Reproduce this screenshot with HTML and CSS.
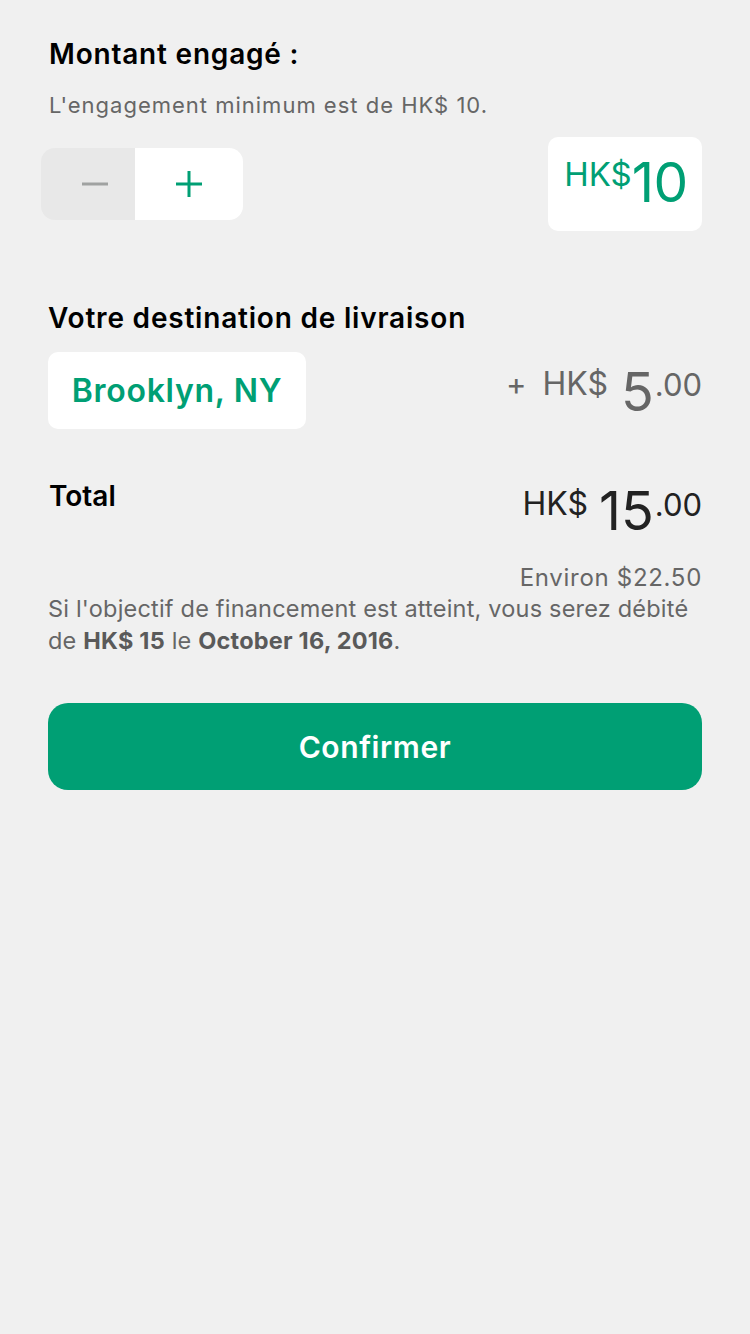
FILE: index.html
```html
<!DOCTYPE html>
<html lang="fr">
<head>
<meta charset="utf-8">
<link rel="stylesheet" href="styles.css">
</head>
<body>
<main class="page">
  <section class="pledge">
    <h2 class="heading">Montant engagé :</h2>
    <p class="hint">L'engagement minimum est de HK$ 10.</p>
    <div class="pledge-row">
      <div class="stepper">
        <button class="step step-minus" aria-label="moins">
          <svg width="26" height="4" viewBox="0 0 26 4"><rect x="0" y="0.5" width="26" height="3" fill="#a0a2a1"/></svg>
        </button>
        <button class="step step-plus" aria-label="plus">
          <svg width="26" height="26" viewBox="0 0 26 26"><rect x="0" y="11.5" width="26" height="3" fill="#009f74"/><rect x="11.5" y="0" width="3" height="26" fill="#009f74"/></svg>
        </button>
      </div>
      <div class="amount-box">
        <span class="amount-cur">HK$</span><span class="amount-num">10</span>
      </div>
    </div>
  </section>

  <section class="dest">
    <h2 class="heading">Votre destination de livraison</h2>
    <div class="dest-row">
      <div class="dest-box">Brooklyn, NY</div>
      <div class="price price-ship">
        <span class="p-plus">+</span>
        <span class="p-cur">HK$</span>
        <span class="p-int">5</span><span class="p-dec">.00</span>
      </div>
    </div>
  </section>

  <section class="total">
    <div class="total-row">
      <h2 class="heading total-label">Total</h2>
      <div class="price price-total">
        <span class="p-cur">HK$</span>
        <span class="p-int">15</span><span class="p-dec">.00</span>
      </div>
    </div>
    <p class="approx">Environ $22.50</p>
    <p class="note"><span class="note-line">Si l'objectif de financement est atteint, vous serez débité</span><span class="note-line">de <b>HK$&nbsp;15</b> le <b>October 16, 2016</b>.</span></p>
  </section>

  <button class="confirm">Confirmer</button>
</main>
</body>
</html>
```

FILE: styles.css
```css
* { box-sizing: border-box; }
html, body { margin: 0; padding: 0; }
body {
  background: #f0f0f0;
  font-family: Inter, "Noto Sans", sans-serif;
  width: 750px;
  min-height: 1334px;
}
.page {
  padding: 37px 48px 0 48px;
  display: flex;
  flex-direction: column;
}
.heading {
  margin: 0;
  font-size: 28px;
  font-weight: 600;
  color: #000;
  line-height: 34px;
  letter-spacing: 0.8px;
}
.pledge .heading { padding-left: 1px; }
.hint {
  margin: 20px 0 0 1px;
  font-size: 22px;
  color: #666;
  line-height: 28px;
  letter-spacing: 1px;
}
.pledge-row {
  display: flex;
  justify-content: space-between;
  align-items: flex-start;
  margin-top: 18px;
}
.stepper {
  display: flex;
  margin-top: 11px;
  margin-left: -7px;
  border-radius: 14px;
  overflow: hidden;
  height: 72px;
}
.step {
  border: 0;
  padding: 0;
  display: flex;
  align-items: center;
  justify-content: center;
  height: 72px;
}
.step-minus { width: 94px; background: #e8e8e8; padding-left: 14px; }
.step-plus { width: 108px; background: #fff; }
.amount-box {
  width: 154px;
  height: 94px;
  background: #fff;
  border-radius: 10px;
  display: flex;
  align-items: flex-start;
  justify-content: center;
  color: #009f74;
  padding-left: 2px;
}
.amount-cur {
  font-size: 33px;
  line-height: 33px;
  margin-top: 21px;
}
.amount-num {
  font-size: 55px;
  line-height: 55px;
  margin-top: 18px;
  letter-spacing: -0.5px;
}
.dest { margin-top: 70px; }
.dest-row {
  display: flex;
  justify-content: space-between;
  align-items: flex-start;
  margin-top: 17px;
}
.dest-box {
  width: 258px;
  height: 77px;
  background: #fff;
  border-radius: 10px;
  display: flex;
  align-items: center;
  justify-content: center;
  font-size: 32px;
  font-weight: 600;
  color: #009f74;
  letter-spacing: 0.7px;
}
.price {
  display: flex;
  align-items: flex-start;
  color: #666;
}
.p-plus { font-size: 31px; line-height: 31px; margin-right: 16px; margin-top: 16px; }
.p-cur { font-size: 32px; line-height: 32px; margin-right: 13px; margin-top: 16px; }
.p-int { font-size: 54px; line-height: 54px; margin-top: 13px; margin-right: 1px; }
.p-dec { font-size: 31px; line-height: 31px; margin-top: 17px; }
.total { margin-top: 50px; }
.total-row {
  display: flex;
  justify-content: space-between;
  align-items: flex-start;
}
.total-label { padding-left: 1px; letter-spacing: 0; }
.price-total { color: #222; }
.price-total .p-cur { margin-top: 9px; margin-right: 11px; }
.price-total .p-int { margin-top: 5px; }
.price-total .p-dec { margin-top: 10px; }
.approx {
  margin: 26px 0 0 0;
  text-align: right;
  font-size: 24px;
  color: #666;
  line-height: 28px;
  letter-spacing: 0.7px;
}
.note {
  margin: 1px 0 0 0;
  font-size: 23.5px;
  color: #666;
  line-height: 32px;
  letter-spacing: 0.2px;
  display: flex;
  flex-direction: column;
}
.note-line { white-space: nowrap; }
.note b { font-weight: 700; color: #5a5a5a; }
.confirm {
  margin-top: 46px;
  width: 654px;
  height: 87px;
  border: 0;
  border-radius: 20px;
  background: #009f74;
  color: #fff;
  font-family: Inter, "Noto Sans", sans-serif;
  font-size: 30px;
  font-weight: 600;
  letter-spacing: 0.6px;
}
```
